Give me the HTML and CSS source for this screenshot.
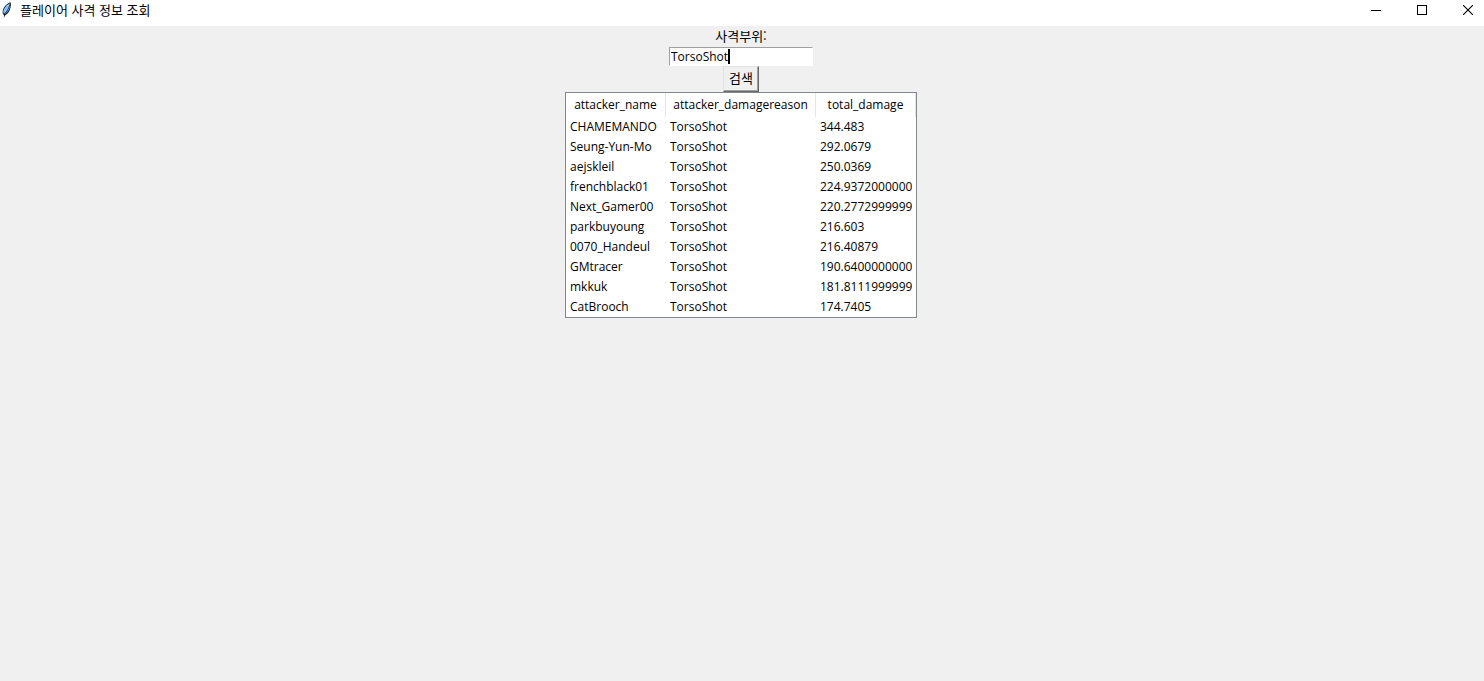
FILE: index.html
```html
<!DOCTYPE html>
<html lang="ko">
<head>
    <meta charset="UTF-8">
    <meta name="viewport" content="width=device-width, initial-scale=1.0">
    <title>플레이어 사격 정보 조회</title>
    <link rel="stylesheet" href="styles.css">
</head>
<body>
    <header class="title-bar">
        <svg class="app-icon" width="16" height="16" viewBox="0 0 16 16" aria-hidden="true">
            <path d="M10.5 .3 C7 1.5 3.4 5 2.7 9 C2.4 11 2.8 12.5 4 13 L3.8 16 L5 13.4 C8 12 10 9 10.6 5 C10.9 3.5 11.2 1.5 10.5 .3 Z" fill="#1a1a1a"/>
            <path d="M9.9 1.2 C6.2 2.8 3.6 6.5 3.2 10 L4 12 C7 9 8.8 5.5 9.9 1.2 Z" fill="#8cc2fa"/>
            <path d="M10.1 2 C9 6.5 7 9.5 4.7 12.4 C8 10.8 9.9 7.5 10.1 2 Z" fill="#4794e6"/>
        </svg>
        <h1>플레이어 사격 정보 조회</h1>
        <div class="window-buttons">
            <button type="button" aria-label="최소화">
                <svg width="10" height="10" viewBox="0 0 10 10" shape-rendering="crispEdges"><path d="M0 5.5 H10" stroke="#000"/></svg>
            </button>
            <button type="button" aria-label="최대화">
                <svg width="10" height="10" viewBox="0 0 10 10" shape-rendering="crispEdges"><rect x=".5" y=".5" width="9" height="9" fill="none" stroke="#000"/></svg>
            </button>
            <button type="button" aria-label="닫기">
                <svg width="10" height="10" viewBox="0 0 10 10"><path d="M0 0 L10 10 M10 0 L0 10" stroke="#000" stroke-width="1.1"/></svg>
            </button>
        </div>
    </header>

    <main>
        <form class="search-form">
            <label for="damage-reason">사격부위:</label>
            <div class="entry">
                <input type="text" id="damage-reason" value="TorsoShot" autocomplete="off" spellcheck="false">
                <span class="caret"></span>
            </div>
            <button type="button" class="search-button">검색</button>
        </form>

        <table class="result-table">
            <thead>
                <tr><th class="name-col">attacker_name</th><th class="reason-col">attacker_damagereason</th><th class="damage-col">total_damage</th></tr>
            </thead>
            <tbody>
                <tr><td><div>CHAMEMANDO</div></td><td><div>TorsoShot</div></td><td><div>344.483</div></td></tr>
                <tr><td><div>Seung-Yun-Mo</div></td><td><div>TorsoShot</div></td><td><div>292.0679</div></td></tr>
                <tr><td><div>aejskleil</div></td><td><div>TorsoShot</div></td><td><div>250.0369</div></td></tr>
                <tr><td><div>frenchblack01</div></td><td><div>TorsoShot</div></td><td><div>224.9372000000</div></td></tr>
                <tr><td><div>Next_Gamer00</div></td><td><div>TorsoShot</div></td><td><div>220.2772999999</div></td></tr>
                <tr><td><div>parkbuyoung</div></td><td><div>TorsoShot</div></td><td><div>216.603</div></td></tr>
                <tr><td><div>0070_Handeul</div></td><td><div>TorsoShot</div></td><td><div>216.40879</div></td></tr>
                <tr><td><div>GMtracer</div></td><td><div>TorsoShot</div></td><td><div>190.6400000000</div></td></tr>
                <tr><td><div>mkkuk</div></td><td><div>TorsoShot</div></td><td><div>181.8111999999</div></td></tr>
                <tr><td><div>CatBrooch</div></td><td><div>TorsoShot</div></td><td><div>174.7405</div></td></tr>
            </tbody>
        </table>
    </main>
</body>
</html>
```
FILE: styles.css
```css
* {
    box-sizing: border-box;
}
body {
    margin: 0;
    background-color: #f0f0f0;
    color: #000;
    font-family: "Open Sans", "Noto Sans CJK KR", sans-serif;
    font-size: 12px;
    line-height: 20px;
}
button, input {
    font: inherit;
    color: inherit;
}

/* title bar */
.title-bar {
    display: flex;
    align-items: flex-start;
    padding-bottom: 6px;
    background-color: #fff;
}
.app-icon {
    margin-top: 2px;
}
h1, .search-form label, .search-button {
    font-family: "Noto Sans CJK KR", sans-serif;
    font-size: 13px;
    font-weight: normal;
}
h1 {
    flex: 1;
    margin: 0 0 0 4px;
}
.window-buttons {
    display: flex;
    gap: 14px;
}
.window-buttons button {
    display: flex;
    align-items: center;
    justify-content: center;
    width: 32px;
    height: 20px;
    padding: 0;
    border: none;
    background: none;
}

/* search form */
main, .search-form {
    display: flex;
    flex-direction: column;
    align-items: center;
}
main {
    padding-right: 2px;
}
.search-form label {
    padding-bottom: 2px;
    line-height: 19px;
}
.entry {
    position: relative;
}
.entry input {
    display: block;
    width: 144px;
    height: 19px;
    padding: 0 1px;
    border: 1px solid;
    border-color: #a0a0a0 #fff #fff #a0a0a0;
    outline: none;
    background-color: #fff;
}
.caret {
    position: absolute;
    top: 2px;
    left: 59px;
    width: 2px;
    height: 15px;
    background-color: #000;
}
.search-button {
    height: 26px;
    padding: 0 5px 2px;
    border: 1px solid;
    border-color: #e3e3e3 #696969 #696969 #e3e3e3;
    box-shadow: inset -1px -1px #a0a0a0;
    background-color: #f0f0f0;
    line-height: 20px;
}

/* results */
.result-table {
    width: 352px;
    table-layout: fixed;
    border: 1px solid #828790;
    border-spacing: 0;
    background-color: #fff;
}
th {
    height: 24px;
    padding: 0;
    border-right: 1px solid #e5e5e5;
    font-weight: normal;
}
td {
    height: 20px;
    padding: 0 4px;
}
td div {
    overflow: hidden;
    white-space: nowrap;
}
.name-col, .damage-col {
    width: 100px;
}
.reason-col {
    width: 150px;
}
```
